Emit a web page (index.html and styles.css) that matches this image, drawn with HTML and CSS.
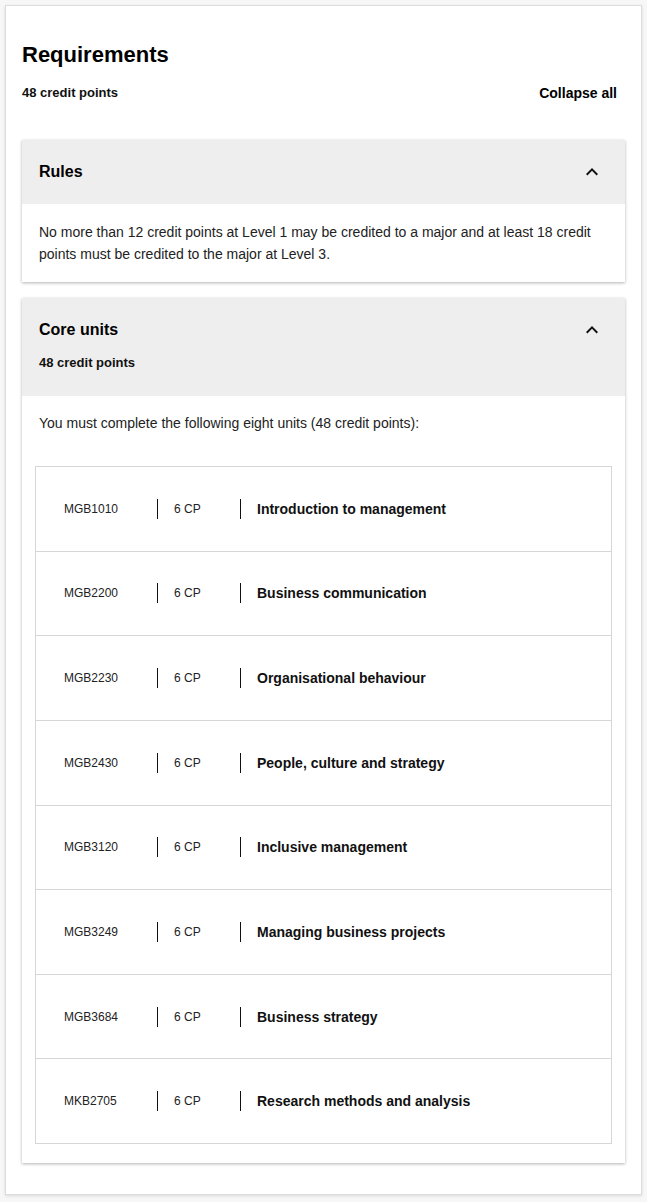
FILE: index.html
```html
<!DOCTYPE html>
<html lang="en">
<head>
    <meta charset="UTF-8">
    <meta name="viewport" content="width=device-width, initial-scale=1.0">
    <title>Requirements</title>
    <link rel="stylesheet" href="styles.css">
</head>
<body>
    <div class="requirements">
        <h1>Requirements</h1>
        <div class="summary">
            <span class="credits">48 credit points</span>
            <button class="collapse-all">Collapse all</button>
        </div>

        <div class="section">
            <div class="section-head">
                <div class="section-title">
                    <h2>Rules</h2>
                </div>
                <svg class="chevron" viewBox="0 0 24 24"><path d="M12 8l-6 6 1.41 1.41L12 10.83l4.59 4.58L18 14z"/></svg>
            </div>
            <div class="section-body">
                <p>No more than 12 credit points at Level 1 may be credited to a major and at least 18 credit points must be credited to the major at Level 3.</p>
            </div>
        </div>

        <div class="section">
            <div class="section-head">
                <div class="section-title">
                    <h2>Core units</h2>
                    <span class="credits">48 credit points</span>
                </div>
                <svg class="chevron" viewBox="0 0 24 24"><path d="M12 8l-6 6 1.41 1.41L12 10.83l4.59 4.58L18 14z"/></svg>
            </div>
            <div class="section-body units-body">
                <p class="intro">You must complete the following eight units (48 credit points):</p>
                <div class="unit-list">
                    <div class="unit"><span class="code">MGB1010</span><span class="cp">6 CP</span><span class="name">Introduction to management</span></div>
                    <div class="unit"><span class="code">MGB2200</span><span class="cp">6 CP</span><span class="name">Business communication</span></div>
                    <div class="unit"><span class="code">MGB2230</span><span class="cp">6 CP</span><span class="name">Organisational behaviour</span></div>
                    <div class="unit"><span class="code">MGB2430</span><span class="cp">6 CP</span><span class="name">People, culture and strategy</span></div>
                    <div class="unit"><span class="code">MGB3120</span><span class="cp">6 CP</span><span class="name">Inclusive management</span></div>
                    <div class="unit"><span class="code">MGB3249</span><span class="cp">6 CP</span><span class="name">Managing business projects</span></div>
                    <div class="unit"><span class="code">MGB3684</span><span class="cp">6 CP</span><span class="name">Business strategy</span></div>
                    <div class="unit"><span class="code">MKB2705</span><span class="cp">6 CP</span><span class="name">Research methods and analysis</span></div>
                </div>
            </div>
        </div>
    </div>
</body>
</html>
```

FILE: styles.css
```css
* {
    margin: 0;
    padding: 0;
    box-sizing: border-box;
}
body {
    font-family: "Liberation Sans", Arial, sans-serif;
    background-color: #f7f7f7;
    color: #111;
    padding: 5px;
}
.requirements {
    width: 637px;
    background-color: #fff;
    border: 1px solid #dcdcdc;
    box-shadow: 0 1px 3px rgba(0, 0, 0, 0.12);
    padding: 36px 16px 31px 16px;
}
.requirements h1 {
    font-size: 22px;
    line-height: 26px;
    font-weight: bold;
    color: #000;
}
.summary {
    display: flex;
    justify-content: space-between;
    align-items: center;
    margin-top: 17px;
    margin-bottom: 39px;
}
.credits {
    font-size: 13px;
    line-height: 16px;
    font-weight: bold;
    color: #111;
}
.collapse-all {
    font-family: inherit;
    font-size: 14px;
    line-height: 16px;
    font-weight: bold;
    color: #000;
    background: none;
    border: none;
    padding: 0 8px 0 0;
    cursor: pointer;
}
.section {
    background-color: #fff;
    box-shadow: 0 1px 3px rgba(0, 0, 0, 0.3);
    margin-bottom: 16px;
}
.section:last-child {
    margin-bottom: 0;
}
.section-head {
    display: flex;
    justify-content: space-between;
    align-items: flex-start;
    background-color: #eeeeee;
    padding: 20px 21px 20px 17px;
}
.section-title h2 {
    font-size: 16px;
    line-height: 24px;
    font-weight: bold;
    color: #000;
}
.section-title .credits {
    display: block;
    margin-top: 13px;
    margin-bottom: 5px;
}
.chevron {
    width: 24px;
    height: 24px;
    fill: #111;
}
.section-body {
    padding: 17px 17px 17px 17px;
}
.section-body p {
    font-size: 14px;
    line-height: 22px;
    color: #222;
}
.units-body {
    padding: 16px 13px 19px 13px;
}
.units-body .intro {
    padding: 0 4px;
    margin-bottom: 32px;
}
.unit-list {
    border-bottom: 1px solid #d6d6d6;
}
.unit {
    display: flex;
    align-items: center;
    height: 84.625px;
    border: 1px solid #d6d6d6;
    border-bottom: none;
    padding-left: 28px;
}
.unit .code,
.unit .cp {
    font-size: 12px;
    line-height: 20px;
    color: #222;
}
.unit .code {
    width: 93px;
}
.unit .cp {
    width: 83px;
    border-left: 1px solid #111;
    padding-left: 16px;
}
.unit .name {
    font-size: 14px;
    line-height: 20px;
    font-weight: bold;
    color: #111;
    border-left: 1px solid #111;
    padding-left: 16px;
}
```
